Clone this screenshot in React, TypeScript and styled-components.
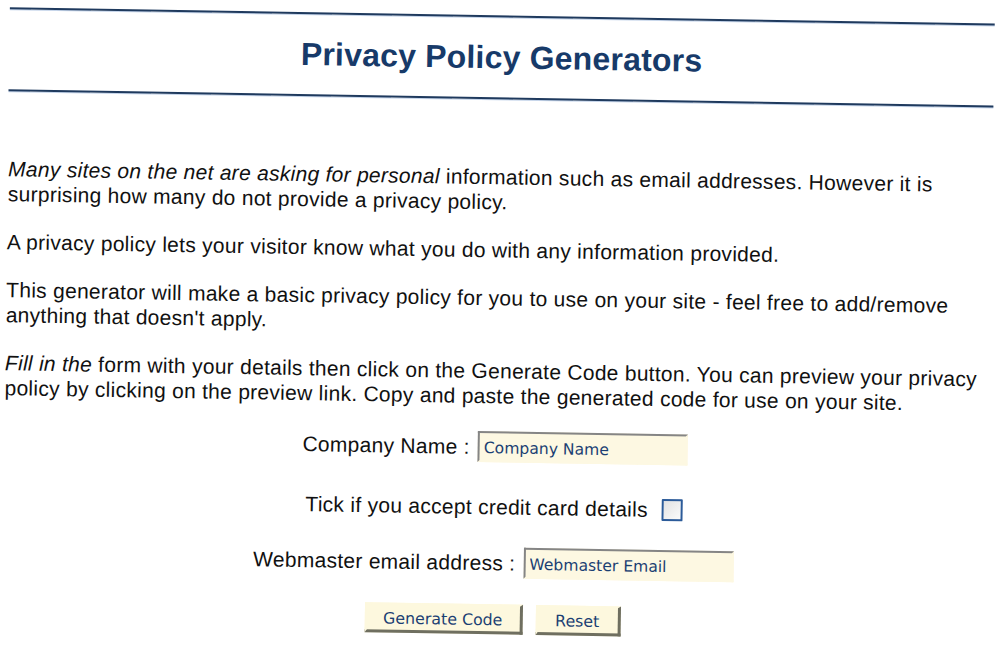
import React from 'react'
import styled, { createGlobalStyle } from 'styled-components'

const GlobalStyle = createGlobalStyle`
  html, body {
    margin: 0;
    padding: 0;
    height: 100%;
    background: #ffffff;
  }
  body {
    font-family: "Liberation Sans", Arial, sans-serif;
    color: #111111;
  }
`

const Page = styled.div`
  width: 1000px;
  min-height: 666px;
  box-sizing: border-box;
  padding: 7px 5px 0 10px;
  transform: rotate(0.95deg);
  transform-origin: 0 0;
`

const Rule = styled.div`
  height: 0;
  border-top: 2px solid #1f3a5e;
  box-shadow: 0 1px 0 #c6d5ea;
`

const Title = styled.h1`
  margin: 0;
  height: 80px;
  display: flex;
  align-items: center;
  justify-content: center;
  font-family: "Liberation Sans", Arial, sans-serif;
  font-weight: bold;
  font-size: 32px;
  letter-spacing: 0.2px;
  color: #173a69;
`

const Body = styled.div`
  padding-top: 65px;
`

const Para = styled.p`
  margin: 0 0 23px 1px;
  font-size: 21px;
  line-height: 25px;
  letter-spacing: 0.28px;
`

const Em = styled.em`
  font-style: italic;
`

const Form = styled.form`
  display: flex;
  flex-direction: column;
  align-items: center;
  margin-top: 1px;
`

const Row = styled.div<{ $after: number; $gap?: number }>`
  display: flex;
  align-items: center;
  justify-content: center;
  gap: ${(p) => p.$gap ?? 8}px;
  margin-bottom: ${(p) => p.$after}px;
`

const Label = styled.label`
  font-size: 21px;
  line-height: 25px;
  letter-spacing: 0.28px;
`

const TextBox = styled.input`
  box-sizing: border-box;
  width: 210px;
  height: 31px;
  padding: 3px 4px 0 4px;
  border-style: solid;
  border-width: 2px;
  border-color: #858585 #fdf8e2 #fdf8e2 #858585;
  background: #fdf8e2;
  font-family: "DejaVu Sans", Verdana, sans-serif;
  font-size: 15.6px;
  color: #1b3f73;
  outline: none;
`

const Check = styled.input`
  appearance: none;
  margin: 0;
  width: 21px;
  height: 22px;
  box-sizing: border-box;
  border: 2px solid #2c5b99;
  border-radius: 1px;
  background: linear-gradient(135deg, #e2e2e2, #fbfbfb);
`

const Button = styled.button<{ $w: number }>`
  box-sizing: border-box;
  width: ${(p) => p.$w}px;
  height: 30px;
  padding: 2px 0 0;
  border-style: solid;
  border-width: 2px 3px 3px 2px;
  border-color: #fdf8de #6f6f60 #6f6f60 #fdf8de;
  background: #fdf8de;
  font-family: "DejaVu Sans", Verdana, sans-serif;
  font-size: 15.8px;
  color: #1b3f73;
  cursor: pointer;
`

export default function App() {
  return (
    <>
      <GlobalStyle />
      <Page>
        <Rule />
        <Title>Privacy Policy Generators</Title>
        <Rule />
        <Body>
          <Para>
            <Em>Many sites on the net are asking for personal</Em> information such as email
            addresses. However it is surprising how many do not provide a privacy policy.
          </Para>
          <Para>
            A privacy policy lets your visitor know what you do with any information provided.
          </Para>
          <Para>
            This generator will make a basic privacy policy for you to use on your site - feel
            free to add/remove anything that doesn't apply.
          </Para>
          <Para>
            <Em>Fill in the</Em> form with your details then click on the Generate Code button.
            You can preview your privacy policy by clicking on the preview link. Copy and paste
            the generated code for use on your site.
          </Para>
          <Form onSubmit={(e) => e.preventDefault()}>
            <Row $after={32}>
              <Label htmlFor='company'>Company Name :</Label>
              <TextBox id='company' defaultValue='Company Name' />
            </Row>
            <Row $after={28} $gap={14}>
              <Label htmlFor='cc'>Tick if you accept credit card details</Label>
              <Check id='cc' type='checkbox' />
            </Row>
            <Row $after={26}>
              <Label htmlFor='email'>Webmaster email address :</Label>
              <TextBox id='email' defaultValue='Webmaster Email' />
            </Row>
            <Row $after={0} $gap={13}>
              <Button type='submit' $w={158}>Generate Code</Button>
              <Button type='reset' $w={85}>Reset</Button>
            </Row>
          </Form>
        </Body>
      </Page>
    </>
  )
}
